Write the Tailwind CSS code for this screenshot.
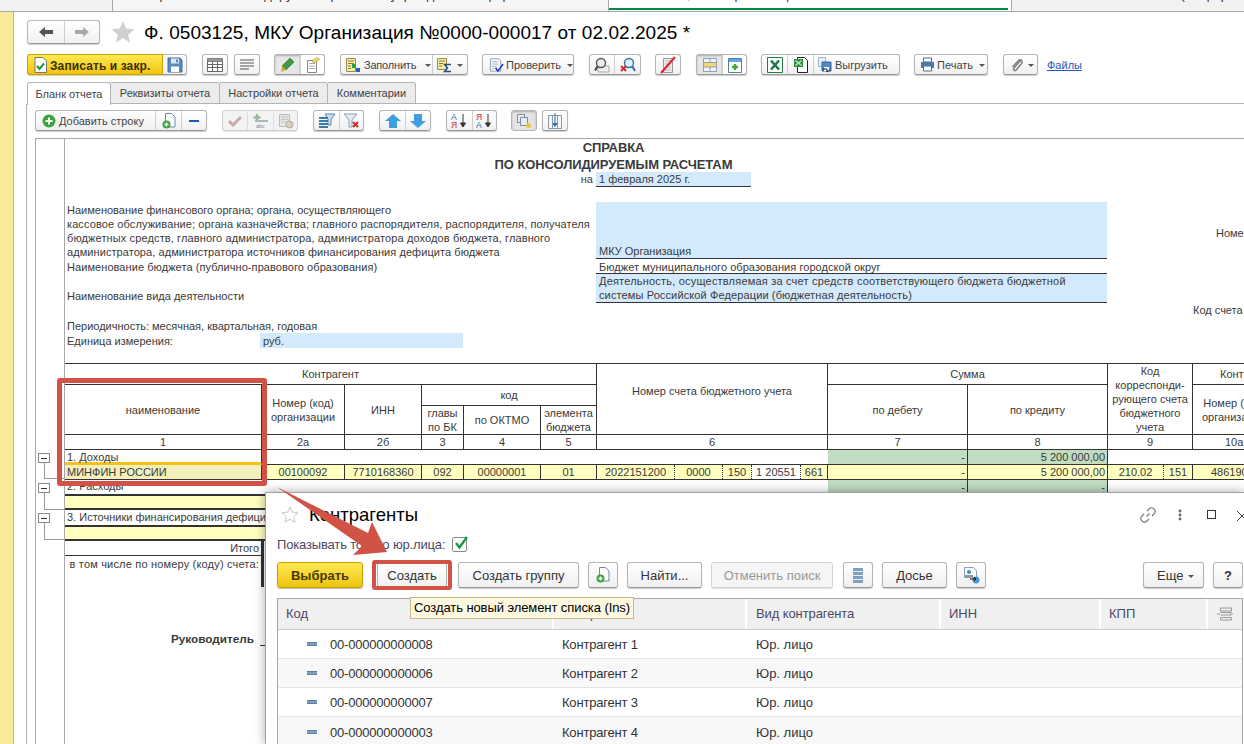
<!DOCTYPE html>
<html lang="ru">
<head>
<meta charset="utf-8">
<title>Ф. 0503125</title>
<script src="https://cdn.jsdelivr.net/npm/@tailwindcss/browser@4"></script>
</head>
<body class="bg-white">
<div class="relative w-[1244px] h-[744px] overflow-hidden bg-white flex flex-col font-['Liberation_Sans',Arial,sans-serif] text-[#333]">

  <!-- top tab strip -->
  <div class="h-[12px] shrink-0 flex border-b border-[#a8a8a8] text-[13px] leading-[16px] whitespace-nowrap overflow-hidden">
    <div class="w-[113px] bg-[#f2f2f2] border-r border-[#a8a8a8]"></div>
    <div class="w-[496px] bg-[#f6f6f6] border-r border-[#a8a8a8] overflow-hidden"><div class="-mt-[13px] pl-[30px]">Справка по консолидируемым расчетам учреждения по форме</div></div>
    <div class="w-[403px] bg-white border-r border-[#a8a8a8] overflow-hidden relative"><div class="-mt-[13px] pl-[10px]">Ф. 0503125, МКУ Организация №0000-000017</div><div class="absolute left-0 right-[3px] bottom-[1px] h-[2px] bg-[#008c45]"></div></div>
    <div class="flex-1 bg-[#f2f2f2] overflow-hidden"><div class="-mt-[13px] pl-[120px]">Отчеты (по форме)</div></div>
  </div>

  <div class="flex-1 flex min-h-0">
    <!-- left yellow strip -->
    <div class="w-[14px] shrink-0 bg-[#fbe99a] border-r border-[#c9bd7c]"></div>

    <div class="flex-1 min-w-0 flex flex-col">
      <!-- title row -->
      <div class="h-[24px] mt-[8px] ml-[13px] flex items-center shrink-0">
        <div class="w-[73px] h-[24px] flex border border-[#b8b8b8] border-b-[#999] rounded-[3px] bg-linear-to-b from-white to-[#f1f1f1] shadow-[0_1px_1px_rgba(0,0,0,0.2)]">
          <div class="w-[37px] flex items-center justify-center border-r border-[#cfcfcf]"><svg width="16" height="12" viewBox="0 0 16 12"><path d="M1 6l6-5v3h8v4H7v3z" fill="#555"/></svg></div>
          <div class="flex-1 flex items-center justify-center"><svg width="16" height="12" viewBox="0 0 16 12"><path d="M15 6L9 1v3H1v4h8v3z" fill="#a9a9a9"/></svg></div>
        </div>
        <svg class="ml-[11px]" width="24" height="24" viewBox="0 0 24 24"><path d="M12 1l3.2 7.6 8.2.7-6.2 5.4 1.900 8L12 18l-7.100 4.700 1.900-8L.6 9.300l8.200-.7z" fill="#cfcfcf"/></svg>
        <div class="ml-[9px] pt-[2px] text-[19px] leading-[24px] tracking-[0.05px] text-black whitespace-nowrap">Ф. 0503125, МКУ Организация №0000-000017 от 02.02.2025 *</div>
      </div>

      <!-- main toolbar -->
      <div class="h-[21px] mt-[10px] ml-[13px] flex shrink-0 text-[11px] text-[#444] whitespace-nowrap">
        <div class="w-[160px] flex border border-[#b4b4b4] border-b-[#999] rounded-[3px] bg-linear-to-b from-white to-[#f0f0f0] shadow-[0_1px_1px_rgba(0,0,0,0.2)]">
          <div class="w-[136px] -m-px flex items-center pl-[6px] gap-[3px] rounded-l-[3px] bg-linear-to-b from-[#ffe94d] to-[#f0c400] border border-[#c9a400] font-bold text-[12px] text-[#3b3000] tracking-[0.1px]">
            <svg width="13" height="16" viewBox="0 0 13 16"><path d="M1 .5h8l3.500 3.500v11.500H1z" fill="#fff" stroke="#777"/><path d="M3 9l2.500 3L10 6.500" fill="none" stroke="#1c9b3a" stroke-width="2"/></svg>
            <span class="pt-[2px]">Записать и закр.</span>
          </div>
          <div class="flex-1 ml-[1px] flex items-center justify-center"><svg width="16" height="16" viewBox="0 0 16 16"><path d="M1 1h12l2 2v12H1z" fill="#5b8cc0" stroke="#3e6b9c"/><path d="M4 1.500h8v5H4z" fill="#dbe8f5"/><path d="M4 9.500h8V15H4z" fill="#fff"/><path d="M9 2.500h2v3H9z" fill="#5b8cc0"/></svg></div>
        </div>
        <div class="w-[26px] ml-[15px] flex items-center justify-center border border-[#b4b4b4] border-b-[#999] rounded-[3px] bg-linear-to-b from-white to-[#f0f0f0] shadow-[0_1px_1px_rgba(0,0,0,0.2)]"><svg width="16" height="14" viewBox="0 0 16 14"><path d="M.5.5h15v13H.5zM.5 3.500h15M.5 6.500h15M.5 9.500h15M5.500.5v13M10.500.5v13" fill="#fff" stroke="#666"/><path d="M.5.500h15v3H.5z" fill="#999"/></svg></div>
        <div class="w-[26px] ml-[6px] flex items-center justify-center border border-[#b4b4b4] border-b-[#999] rounded-[3px] bg-linear-to-b from-white to-[#f0f0f0] shadow-[0_1px_1px_rgba(0,0,0,0.2)]"><svg width="14" height="11" viewBox="0 0 14 11"><path d="M0 1h14M0 4h14M0 7h14M0 10h9" stroke="#555" fill="none"/></svg></div>
        <div class="w-[51px] ml-[14px] flex border border-[#b4b4b4] border-b-[#999] rounded-[3px] bg-white shadow-[0_1px_1px_rgba(0,0,0,0.2)]">
          <div class="w-[26px] bg-[#e6e6e6] shadow-[inset_0_1px_2px_rgba(0,0,0,0.25)] flex items-center justify-center border-r border-[#cfcfcf]"><svg width="15" height="16" viewBox="0 0 15 16"><path d="M10 1l4 4-8 8-4-4z" fill="#3e9a3e" stroke="#2a6f2a" stroke-width=".6"/><path d="M2 9l4 4-5 2z" fill="#e8a33c"/></svg></div>
          <div class="flex-1 flex items-center justify-center"><svg width="14" height="16" viewBox="0 0 14 16"><path d="M1.500 3.500h9v12h-9z" fill="#fff" stroke="#888"/><path d="M3 6.500h6M3 9h6M3 11.500h6" stroke="#aaa"/><path d="M6 4l5-3.500 2.500 2L8 6z" fill="#f5dd60" stroke="#a08a20" stroke-width=".6"/></svg></div>
        </div>
        <div class="w-[128px] ml-[15px] flex border border-[#b4b4b4] border-b-[#999] rounded-[3px] bg-linear-to-b from-white to-[#f0f0f0] shadow-[0_1px_1px_rgba(0,0,0,0.2)]">
          <div class="w-[92px] flex items-center pl-[4px] gap-[3px] border-r border-[#cfcfcf]">
            <svg width="16" height="16" viewBox="0 0 16 16"><path d="M1.500 1.500h9v13h-9z" fill="#f6eda5" stroke="#9a8a45"/><path d="M3 4h6M3 6.500h6M3 9h3M3 11.500h3" stroke="#8b7d40"/><path d="M7 7h4v4H7z" fill="#25a244"/><path d="M11 11h4v4h-4z" fill="#2f5fb3"/></svg>
            <span class="pt-[2px] tracking-[-0.2px]">Заполнить</span><span class="ml-[6px] mt-[1px] w-0 h-0 border-x-[3px] border-x-transparent border-t-[3px] border-t-[#555]"></span>
          </div>
          <div class="flex-1 flex items-center pl-[3px] gap-[5px]">
            <svg width="16" height="16" viewBox="0 0 16 16"><path d="M1.500 1.500h9v11h-9z" fill="#f6eda5" stroke="#9a8a45"/><path d="M3 4h6M3 6.500h4M3 9h3" stroke="#8b7d40"/><path d="M15 7.500H8.500l3 3.500-3 3.500H15" fill="none" stroke="#274c8a" stroke-width="1.400"/></svg>
            <span class="mt-[1px] w-0 h-0 border-x-[3px] border-x-transparent border-t-[3px] border-t-[#555]"></span>
          </div>
        </div>
        <div class="w-[92px] ml-[14px] flex items-center pl-[6px] gap-[2px] border border-[#b4b4b4] border-b-[#999] rounded-[3px] bg-linear-to-b from-white to-[#f0f0f0] shadow-[0_1px_1px_rgba(0,0,0,0.2)]">
          <svg width="16" height="16" viewBox="0 0 16 16"><path d="M1.500 1.500h9l2 2v11h-11z" fill="#fff" stroke="#8a9ab5"/><path d="M3 4.500h7M3 7h7M3 9.500h5M3 12h3" stroke="#a0a8b8"/><path d="M7 11l2.500 3.500L15 7" fill="none" stroke="#1a2fd0" stroke-width="1.600"/></svg>
          <span class="pt-[2px]">Проверить</span><span class="ml-[4px] mt-[1px] w-0 h-0 border-x-[3px] border-x-transparent border-t-[3px] border-t-[#555]"></span>
        </div>
        <div class="w-[52px] ml-[15px] flex border border-[#b4b4b4] border-b-[#999] rounded-[3px] bg-linear-to-b from-white to-[#f0f0f0] shadow-[0_1px_1px_rgba(0,0,0,0.2)]">
          <div class="w-[25px] flex items-center justify-center border-r border-[#cfcfcf]"><svg width="16" height="16" viewBox="0 0 16 16"><path d="M4 9h11v6H4z" fill="#eee" stroke="#aaa"/><circle cx="7" cy="6" r="4.500" fill="#e8eef0" stroke="#555" stroke-width="1.400"/><path d="M3.500 9.500L1 13.500" stroke="#444" stroke-width="2"/></svg></div>
          <div class="flex-1 flex items-center justify-center"><svg width="16" height="16" viewBox="0 0 16 16"><circle cx="9" cy="6" r="4.500" fill="#e4f0fa" stroke="#2f6fa8" stroke-width="1.400"/><path d="M12.500 9.500L15 14" stroke="#2f6fa8" stroke-width="2"/><path d="M1 9l5 5M6 9l-5 5" stroke="#d9262c" stroke-width="2"/></svg></div>
        </div>
        <div class="w-[26px] ml-[14px] flex items-center justify-center border border-[#b4b4b4] border-b-[#999] rounded-[3px] bg-linear-to-b from-white to-[#f0f0f0] shadow-[0_1px_1px_rgba(0,0,0,0.2)]"><svg width="18" height="18" viewBox="0 0 18 18"><path d="M4.500 2.500h9v14h-9z" fill="#eee" stroke="#999"/><path d="M6 5h6M6 8h6M6 11h6M6 14h6" stroke="#bbb"/><path d="M2 17L16 1" stroke="#e2202a" stroke-width="2"/></svg></div>
        <div class="w-[51px] ml-[15px] flex border border-[#b4b4b4] border-b-[#999] rounded-[3px] bg-white shadow-[0_1px_1px_rgba(0,0,0,0.2)]">
          <div class="w-[26px] bg-[#e6e6e6] shadow-[inset_0_1px_2px_rgba(0,0,0,0.25)] flex items-center justify-center border-r border-[#cfcfcf]"><svg width="14" height="14" viewBox="0 0 14 14"><path d="M.5.500h13v13H.5z" fill="#f2f5f8" stroke="#8ea2b5"/><path d="M1 5h12v4H1z" fill="#f5d76a"/><path d="M.5 4.500h13M.5 9h13M7 .5V4M7 9v5" stroke="#8ea2b5"/></svg></div>
          <div class="flex-1 flex items-center justify-center"><svg width="14" height="16" viewBox="0 0 14 16"><path d="M.5 1.500h13v14H.5z" fill="#fff" stroke="#5d7d9c"/><path d="M1 2h12v3H1z" fill="#5aa9e6"/><path d="M7 7v6M4 10h6" stroke="#3eae2f" stroke-width="2.400"/></svg></div>
        </div>
        <div class="w-[139px] ml-[14px] flex border border-[#b4b4b4] border-b-[#999] rounded-[3px] bg-linear-to-b from-white to-[#f0f0f0] shadow-[0_1px_1px_rgba(0,0,0,0.2)]">
          <div class="w-[26px] flex items-center justify-center border-r border-[#cfcfcf]"><svg width="16" height="16" viewBox="0 0 16 16"><path d="M.5.500h15v15H.5z" fill="#fff" stroke="#1f7a45"/><path d="M4 3.500l8 9M12 3.500l-8 9" stroke="#1f7a45" stroke-width="2.600"/></svg></div>
          <div class="w-[26px] flex items-center justify-center border-r border-[#cfcfcf]"><svg width="16" height="18" viewBox="0 0 16 18"><path d="M4.500 1.500h7l3 3v12h-10z" fill="#fff" stroke="#222"/><path d="M1 3h9v8H1z" fill="#2f8f3f"/><path d="M2.500 4.500l6 5M8.500 4.500l-6 5" stroke="#bfe6bf" stroke-width="1.400"/></svg></div>
          <div class="flex-1 flex items-center pl-[3px] gap-[2px]"><svg width="16" height="18" viewBox="0 0 16 18"><path d="M1.500 1.500h7v9h-7z" fill="#e8eef6" stroke="#9fb2c9"/><path d="M5 6h9v9H5z" fill="#4b8cc8" stroke="#2f6595"/><path d="M7 11h5v4H7z" fill="#fff"/><path d="M6 13h4v3l3-2" fill="none" stroke="#111"/></svg><span class="pt-[2px]">Выгрузить</span></div>
        </div>
        <div class="w-[74px] ml-[14px] flex items-center pl-[5px] gap-[2px] border border-[#b4b4b4] border-b-[#999] rounded-[3px] bg-linear-to-b from-white to-[#f0f0f0] shadow-[0_1px_1px_rgba(0,0,0,0.2)]">
          <svg width="15" height="15" viewBox="0 0 15 15"><path d="M3.500 1h8v4h-8z" fill="#fff" stroke="#4a6f95"/><path d="M1 5h13v6H1z" fill="#4a7bab"/><path d="M3.500 9h8v5h-8z" fill="#fff" stroke="#4a6f95"/></svg>
          <span class="pt-[2px]">Печать</span><span class="ml-[4px] mt-[1px] w-0 h-0 border-x-[3px] border-x-transparent border-t-[3px] border-t-[#555]"></span>
        </div>
        <div class="w-[35px] ml-[15px] flex items-center pl-[6px] gap-[5px] border border-[#b4b4b4] border-b-[#999] rounded-[3px] bg-linear-to-b from-white to-[#f0f0f0] shadow-[0_1px_1px_rgba(0,0,0,0.2)]">
          <svg width="13" height="16" viewBox="0 0 13 16"><path d="M11 3L4 11c-1.500 2 .8 3.500 2.200 2l5.300-6.500c2-2.500-1-5-3-3L2.500 10" fill="none" stroke="#777" stroke-width="1.300"/></svg>
          <span class="mt-[1px] w-0 h-0 border-x-[3px] border-x-transparent border-t-[3px] border-t-[#555]"></span>
        </div>
        <a class="ml-[9px] leading-[23px] text-[#1f55c0] underline">Файлы</a>
      </div>

      <!-- tabs -->
      <div class="h-[22px] mt-[7px] ml-[13px] flex shrink-0 text-[11px] text-[#444] whitespace-nowrap">
        <div class="w-[84px] -mb-px z-10 flex items-center justify-center bg-white border border-b-0 border-[#b4b4b4] rounded-t-[3px]">Бланк отчета</div>
        <div class="w-[109px] flex items-center justify-center bg-[#ececec] border-t border-r border-b border-[#b4b4b4] rounded-tr-[3px]">Реквизиты отчета</div>
        <div class="w-[108px] flex items-center justify-center bg-[#ececec] border-t border-r border-b border-[#b4b4b4] rounded-tr-[3px]">Настройки отчета</div>
        <div class="w-[88px] flex items-center justify-center bg-[#ececec] border-t border-r border-b border-[#b4b4b4] rounded-tr-[3px]">Комментарии</div>
        <div class="flex-1 border-b border-[#b4b4b4]"></div>
      </div>

      <!-- tab panel -->
      <div class="flex-1 min-h-0 ml-[12px] border-l border-[#b4b4b4] flex flex-col">
        <!-- second toolbar -->
        <div class="h-[21px] mt-[6px] ml-[8px] flex shrink-0 text-[11px] text-[#444] whitespace-nowrap">
          <div class="w-[172px] flex border border-[#b4b4b4] border-b-[#999] rounded-[3px] bg-linear-to-b from-white to-[#f0f0f0] shadow-[0_1px_1px_rgba(0,0,0,0.2)]">
            <div class="w-[120px] flex items-center pl-[6px] gap-[3px] border-r border-[#cfcfcf]"><svg width="14" height="14" viewBox="0 0 14 14"><circle cx="7" cy="7" r="6.500" fill="#3aa53a"/><path d="M7 3.500v7M3.500 7h7" stroke="#fff" stroke-width="2"/></svg><span class="pt-[2px]">Добавить строку</span></div>
            <div class="w-[26px] flex items-center justify-center border-r border-[#cfcfcf]"><svg width="14" height="16" viewBox="0 0 14 16"><path d="M3.500 .5h6l3.500 3.500v10h-9.500z" fill="#fff" stroke="#6d8ba8"/><circle cx="4.500" cy="11.500" r="4" fill="#3aa53a"/><path d="M4.500 9.500v4M2.500 11.500h4" stroke="#fff" stroke-width="1.400"/></svg></div>
            <div class="flex-1 flex items-center justify-center"><div class="w-[10px] h-[2px] bg-[#1c5cab]"></div></div>
          </div>
          <div class="w-[76px] ml-[15px] flex border border-[#cfcfcf] rounded-[3px] bg-[#f3f3f3] shadow-[0_1px_1px_rgba(0,0,0,0.12)]">
            <div class="w-[25px] flex items-center justify-center border-r border-[#dedede]"><svg width="14" height="12" viewBox="0 0 14 12"><path d="M1 6l4 4 8-8" fill="none" stroke="#c8a8a8" stroke-width="3"/></svg></div>
            <div class="w-[26px] flex items-center justify-center border-r border-[#dedede]"><svg width="17" height="15" viewBox="0 0 17 15"><path d="M5 1v7M1.500 4.500h7" stroke="#9bb89b" stroke-width="2.400"/><path d="M3 7h13v2H3z" fill="#aab7bd"/><text x="4" y="15" font-size="5.500" font-family="Liberation Sans" fill="#888">abc</text></svg></div>
            <div class="flex-1 flex items-center justify-center"><svg width="16" height="16" viewBox="0 0 16 16"><path d="M1.500 1.500h10v12h-10z" fill="#e6e6e6" stroke="#bbb"/><path d="M3 4h7M3 6.500h7M3 9h5" stroke="#c4c4c4"/><circle cx="11.500" cy="11.500" r="3.500" fill="#d8cfc0" stroke="#b5a995"/></svg></div>
          </div>
          <div class="w-[51px] ml-[15px] flex border border-[#b4b4b4] border-b-[#999] rounded-[3px] bg-linear-to-b from-white to-[#f0f0f0] shadow-[0_1px_1px_rgba(0,0,0,0.2)]">
            <div class="w-[26px] flex items-center justify-center border-r border-[#cfcfcf]"><svg width="18" height="15" viewBox="0 0 18 15"><path d="M7 1h10l-4 5v6H10V6z" fill="#cfe0ec" stroke="#5d87a8"/><path d="M1 5h9M1 8h9M1 11h9M1 14h9" stroke="#3a7cb0" stroke-width="2"/></svg></div>
            <div class="flex-1 flex items-center justify-center"><svg width="17" height="15" viewBox="0 0 17 15"><path d="M1 1h13L9 7v7H6V7z" fill="#e6edf2" stroke="#8aa0b0"/><path d="M10 9l5 5M15 9l-5 5" stroke="#d9262c" stroke-width="2"/></svg></div>
          </div>
          <div class="w-[52px] ml-[15px] flex border border-[#b4b4b4] border-b-[#999] rounded-[3px] bg-linear-to-b from-white to-[#f0f0f0] shadow-[0_1px_1px_rgba(0,0,0,0.2)]">
            <div class="w-[26px] flex items-center justify-center border-r border-[#cfcfcf]"><svg width="16" height="14" viewBox="0 0 16 14"><path d="M8 0l8 7h-4v7H4V7H0z" fill="#3f9fe0"/></svg></div>
            <div class="flex-1 flex items-center justify-center"><svg width="16" height="14" viewBox="0 0 16 14"><path d="M8 14l8-7h-4V0H4v7H0z" fill="#3f9fe0"/></svg></div>
          </div>
          <div class="w-[51px] ml-[15px] flex border border-[#b4b4b4] border-b-[#999] rounded-[3px] bg-linear-to-b from-white to-[#f0f0f0] shadow-[0_1px_1px_rgba(0,0,0,0.2)]">
            <div class="w-[26px] flex items-center justify-center border-r border-[#cfcfcf]"><svg width="17" height="17" viewBox="0 0 17 17"><text x="0" y="7.500" font-size="8.500" font-family="Liberation Sans" fill="#1f6fc0">А</text><text x="0" y="16" font-size="8.500" font-family="Liberation Sans" fill="#c0262c">Я</text><path d="M12 2v12M9.500 11l2.500 4 2.500-4z" fill="#333" stroke="#333"/></svg></div>
            <div class="flex-1 flex items-center justify-center"><svg width="17" height="17" viewBox="0 0 17 17"><text x="0" y="7.500" font-size="8.500" font-family="Liberation Sans" fill="#c0262c">Я</text><text x="0" y="16" font-size="8.500" font-family="Liberation Sans" fill="#1f6fc0">А</text><path d="M12 2v12M9.500 11l2.500 4 2.500-4z" fill="#333" stroke="#333"/></svg></div>
          </div>
          <div class="w-[26px] ml-[14px] flex items-center justify-center border border-[#b4b4b4] rounded-[3px] bg-[#e4e4e4] shadow-[inset_0_1px_2px_rgba(0,0,0,0.25)]"><svg width="16" height="16" viewBox="0 0 16 16"><path d="M1.500 1.500h7v8h-7z" fill="#e6edf2" stroke="#7d8f9e"/><path d="M4.500 4.500h7v8h-7z" fill="#e6edf2" stroke="#7d8f9e"/><circle cx="12.500" cy="12.500" r="2.500" fill="#f0c33c"/></svg></div>
          <div class="w-[26px] ml-[5px] flex items-center justify-center border border-[#b4b4b4] border-b-[#999] rounded-[3px] bg-linear-to-b from-white to-[#f0f0f0] shadow-[0_1px_1px_rgba(0,0,0,0.2)]"><svg width="16" height="17" viewBox="0 0 16 17"><path d="M1.500 3.500h13v13h-13zM5.500 3.500v13M10.500 3.500v13" fill="#f4f6f8" stroke="#8b9aa8"/><path d="M8 1v13M6 11.500l2 3 2-3z" fill="#2f6fb0" stroke="#2f6fb0"/></svg></div>
        </div>

        <!-- spreadsheet -->
        <div class="flex-1 min-h-0 mt-[7px] ml-[8px] border-l border-t border-[#a8a8a8] flex text-[11px] leading-[14px] text-[#3a3a3a] whitespace-nowrap">
          <!-- outline gutter -->
          <div class="relative w-[29px] shrink-0 border-r border-[#a8a8a8]">
            <div class="absolute left-[8px] top-[314px] w-[1px] h-[25px] bg-[#9a9a9a]"></div>
            <div class="absolute left-[8px] top-[339px] w-[20px] h-[1px] bg-[#9a9a9a]"></div>
            <div class="absolute left-[2px] top-[314px] w-[12px] h-[10px] bg-white border border-[#8a8a8a] flex items-center justify-center"><div class="w-[6px] h-[1px] bg-[#333]"></div></div>
            <div class="absolute left-[8px] top-[344px] w-[1px] h-[26px] bg-[#9a9a9a]"></div>
            <div class="absolute left-[8px] top-[370px] w-[20px] h-[1px] bg-[#9a9a9a]"></div>
            <div class="absolute left-[2px] top-[344px] w-[12px] h-[10px] bg-white border border-[#8a8a8a] flex items-center justify-center"><div class="w-[6px] h-[1px] bg-[#333]"></div></div>
            <div class="absolute left-[8px] top-[374px] w-[1px] h-[26px] bg-[#9a9a9a]"></div>
            <div class="absolute left-[8px] top-[400px] w-[20px] h-[1px] bg-[#9a9a9a]"></div>
            <div class="absolute left-[2px] top-[374px] w-[12px] h-[10px] bg-white border border-[#8a8a8a] flex items-center justify-center"><div class="w-[6px] h-[1px] bg-[#333]"></div></div>
          </div>

          <!-- sheet -->
          <div class="flex-1 min-w-0 overflow-hidden">
            <!-- heading -->
            <div class="w-[1097px] h-[33px] text-center font-bold text-[13px] leading-[17px] tracking-[-0.1px]">
              <div>СПРАВКА</div>
              <div>ПО КОНСОЛИДИРУЕМЫМ РАСЧЕТАМ</div>
            </div>
            <div class="flex h-[15px]">
              <div class="w-[531px] pr-[3px] text-right leading-[15px]">на</div>
              <div class="w-[155px] bg-[#d3eafd] border-b border-[#333] pl-[3px] leading-[15px]">1 февраля 2025 г.</div>
            </div>

            <!-- requisites -->
            <div class="mt-[15px] grid grid-cols-[531px_511px_1fr] grid-rows-[57px_15px_29px_16px]">
              <div class="pl-[2px] self-end leading-[14px]">
                <div>Наименование финансового органа; органа, осуществляющего</div>
                <div class="tracking-[0.1px]">кассовое обслуживание; органа казначейства; главного распорядителя, распорядителя, получателя</div>
                <div class="tracking-[0.12px]">бюджетных средств, главного администратора, администратора доходов бюджета, главного</div>
                <div class="tracking-[0.07px]">администратора, администратора источников финансирования дефицита бюджета</div>
              </div>
              <div class="bg-[#d3eafd] border-b border-[#333] pl-[3px] flex items-end">МКУ Организация</div>
              <div class="pl-[109px] pt-[24px] overflow-hidden">Номер (код) организации</div>
              <div class="pl-[2px] pt-[1px] tracking-[0.07px]">Наименование бюджета (публично-правового образования)</div>
              <div class="border-b border-[#333] pl-[3px] pt-[1px] tracking-[0.05px]">Бюджет муниципального образования городской округ</div>
              <div></div>
              <div class="pl-[2px] self-end">Наименование вида деятельности</div>
              <div class="bg-[#d3eafd] border-b border-[#333] pl-[3px]">
                <div class="tracking-[0.2px]">Деятельность, осуществляемая за счет средств соответствующего бюджета бюджетной</div>
                <div class="tracking-[0.12px]">системы Российской Федерации (бюджетная деятельность)</div>
              </div>
              <div></div>
              <div></div><div></div>
              <div class="pl-[86px] overflow-hidden">Код счета бюджетного учета</div>
            </div>
            <div class="pl-[2px] h-[14px]">Периодичность: месячная, квартальная, годовая</div>
            <div class="flex h-[15px] pl-[2px]">
              <div class="w-[193px] leading-[17px]">Единица измерения:</div>
              <div class="w-[203px] bg-[#d3eafd] pl-[3px] leading-[17px]">руб.</div>
            </div>

            <!-- table -->
            <div class="mt-[15px] grid grid-cols-[197px_83px_77px_42px_77px_56px_231px_140px_140px_85px_100px] grid-rows-[21px_21px_29px_15px_15px_15px_14px_16px_15px_16px] border-t border-[#333] w-[1300px] text-center leading-[14px]">
              <div class="col-start-1 col-span-6 row-start-1 border-r border-b border-[#333] flex items-center justify-center">Контрагент</div>
              <div class="col-start-7 row-start-1 row-span-3 border-r border-b border-[#333] flex items-center justify-center pb-[16px]">Номер счета бюджетного учета</div>
              <div class="col-start-8 col-span-2 row-start-1 border-r border-b border-[#333] flex items-center justify-center">Сумма</div>
              <div class="col-start-10 row-start-1 row-span-3 border-r border-b border-[#333] flex items-center justify-center whitespace-normal">Код корреспонди-рующего счета бюджетного учета</div>
              <div class="col-start-11 row-start-1 border-b border-[#333] flex items-center justify-start pl-[27px]">Контрагент</div>

              <div class="col-start-1 row-start-2 row-span-2 border-r border-b border-[#333] flex items-center justify-center">наименование</div>
              <div class="col-start-2 row-start-2 row-span-2 border-r border-b border-[#333] flex items-center justify-center whitespace-normal">Номер (код) организации</div>
              <div class="col-start-3 row-start-2 row-span-2 border-r border-b border-[#333] flex items-center justify-center">ИНН</div>
              <div class="col-start-4 col-span-3 row-start-2 border-r border-b border-[#333] flex items-center justify-center">код</div>
              <div class="col-start-4 row-start-3 border-r border-b border-[#333] flex items-center justify-center whitespace-normal">главы по БК</div>
              <div class="col-start-5 row-start-3 border-r border-b border-[#333] flex items-center justify-center">по ОКТМО</div>
              <div class="col-start-6 row-start-3 border-r border-b border-[#333] flex items-center justify-center whitespace-normal">элемента бюджета</div>
              <div class="col-start-8 row-start-2 row-span-2 border-r border-b border-[#333] flex items-center justify-center">по дебету</div>
              <div class="col-start-9 row-start-2 row-span-2 border-r border-b border-[#333] flex items-center justify-center">по кредиту</div>
              <div class="col-start-11 row-start-2 row-span-2 border-b border-[#333] flex items-center justify-start pl-[9px]">Номер (код)<br>организации</div>

              <div class="row-start-4 border-r border-b border-[#333]">1</div>
              <div class="row-start-4 border-r border-b border-[#333]">2а</div>
              <div class="row-start-4 border-r border-b border-[#333]">2б</div>
              <div class="row-start-4 border-r border-b border-[#333]">3</div>
              <div class="row-start-4 border-r border-b border-[#333]">4</div>
              <div class="row-start-4 border-r border-b border-[#333]">5</div>
              <div class="row-start-4 border-r border-b border-[#333]">6</div>
              <div class="row-start-4 border-r border-b border-[#333]">7</div>
              <div class="row-start-4 border-r border-b border-[#333]">8</div>
              <div class="row-start-4 border-r border-b border-[#333]">9</div>
              <div class="row-start-4 border-b border-[#333] text-left pl-[32px]">10а</div>

              <!-- Доходы -->
              <div class="row-start-5 col-start-1 border-r border-b-[3px] border-b-[#f5c21b] border-r-[#333] text-left pl-[2px] leading-[15px]">1. Доходы</div>
              <div class="row-start-5 col-start-2 col-span-6 border-b border-[#333]"></div>
              <div class="row-start-5 col-start-8 bg-[#c1dcc0] border-r border-b border-[#333] text-right pr-[2px]">-</div>
              <div class="row-start-5 col-start-9 bg-[#c1dcc0] border-r border-b border-[#333] text-right pr-[2px]">5 200 000,00</div>
              <div class="row-start-5 col-start-10 col-span-2 border-b border-[#333]"></div>

              <!-- МИНФИН -->
              <div class="row-start-6 col-start-1 bg-[#f3f0bd] border-r border-b border-[#333] text-left pl-[2px]">МИНФИН РОССИИ</div>
              <div class="row-start-6 col-start-2 bg-[#ffffc0] border-r border-b border-[#333]">00100092</div>
              <div class="row-start-6 col-start-3 bg-[#ffffc0] border-r border-b border-[#333]">7710168360</div>
              <div class="row-start-6 col-start-4 bg-[#ffffc0] border-r border-b border-[#333]">092</div>
              <div class="row-start-6 col-start-5 bg-[#ffffc0] border-r border-b border-[#333]">00000001</div>
              <div class="row-start-6 col-start-6 bg-[#ffffc0] border-r border-b border-[#333]">01</div>
              <div class="row-start-6 col-start-7 bg-[#ffffc0] border-r border-b border-[#333] flex">
                <div class="w-[78px] border-r border-dotted border-[#333]">2022151200</div>
                <div class="w-[48px] border-r border-dotted border-[#333]">0000</div>
                <div class="w-[29px] border-r border-dotted border-[#333]">150</div>
                <div class="w-[49px] bg-white border-r border-dotted border-[#333]">1 20551</div>
                <div class="flex-1">661</div>
              </div>
              <div class="row-start-6 col-start-8 bg-[#ffffc0] border-r border-b border-[#333] text-right pr-[2px]">-</div>
              <div class="row-start-6 col-start-9 bg-[#ffffc0] border-r border-b border-[#333] text-right pr-[2px]">5 200 000,00</div>
              <div class="row-start-6 col-start-10 bg-[#ffffc0] border-r border-b border-[#333] flex">
                <div class="w-[56px] border-r border-dotted border-[#333]">210.02</div>
                <div class="flex-1">151</div>
              </div>
              <div class="row-start-6 col-start-11 bg-[#ffffc0] border-b border-[#333] text-left pl-[18px]">486190</div>

              <!-- Расходы -->
              <div class="row-start-7 col-start-1 col-span-7 text-left pl-[2px] leading-[13px]">2. Расходы</div>
              <div class="row-start-7 col-start-8 bg-[#c1dcc0] border-r border-[#333] text-right pr-[2px]">-</div>
              <div class="row-start-7 col-start-9 bg-[#c1dcc0] border-r border-[#333] text-right pr-[2px]">-</div>
              <div class="row-start-8 col-start-1 col-span-11 bg-[#ffffc0] border-y-2 border-[#333]"></div>

              <!-- Источники -->
              <div class="row-start-9 col-start-1 col-span-11 text-left pl-[2px] leading-[15px]">3. Источники финансирования дефицита бюджета</div>
              <div class="row-start-10 col-start-1 col-span-11 bg-[#ffffc0] border-y-2 border-[#333]"></div>
            </div>

            <!-- bottom of the sheet -->
            <div class="flex">
              <div class="w-[196px]">
                <div class="h-[15px] border-b border-[#333] text-right pr-[2px]">Итого</div>
                <div class="h-[31px] pt-[1px] text-right pr-[2px] tracking-[0.18px]">в том числе по номеру (коду) счета:</div>
              </div>
              <div class="w-[3px] h-[46px] bg-[#333]"></div>
            </div>
            <div class="flex mt-[45px] w-[203px]">
              <div class="w-[189px] text-right font-bold text-[11.75px]">Руководитель</div>
              <div class="ml-[6px] mt-[13px] w-[6px] h-[1px] bg-[#333]"></div>
            </div>
          </div>
        </div>
      </div>
    </div>
  </div>

  <!-- red frame around "наименование" -->
  <div class="absolute left-[57px] top-[378px] w-[210px] h-[108px] border-[5px] border-[#d05346] rounded-[3px] pointer-events-none"></div>

  <!-- dialog -->
  <div class="absolute left-[265px] top-[492px] right-0 bottom-0 bg-white border-t border-l border-[#a0a0a0] shadow-[0_0_10px_rgba(0,0,0,0.35)] flex flex-col pl-[11px] text-[13px] leading-[16px] text-[#333] whitespace-nowrap">
    <div class="h-[43px] shrink-0 flex items-center">
      <svg class="ml-[4px] -mt-[1px]" width="18" height="17" viewBox="0 0 18 17"><path d="M9 1l2.300 5.200 5.700.6-4.300 3.800 1.300 5.600L9 13.300 4 16.200l1.300-5.600L1 6.800l5.700-.6z" fill="#fff" stroke="#c8c8c8"/></svg>
      <div class="ml-[10px] text-[18.5px] leading-[22px] text-black">Контрагенты</div>
      <div class="flex-1"></div>
      <svg class="shrink-0" width="16" height="16" viewBox="0 0 16 16"><path d="M6.500 9.500l3-3M7 4l2-2a3 3 0 0 1 5 5l-2 2M9 12l-2 2a3 3 0 0 1-5-5l2-2" fill="none" stroke="#777" stroke-width="1.100"/></svg>
      <svg class="ml-[22px] shrink-0" width="4" height="12" viewBox="0 0 4 12"><circle cx="2" cy="2" r="1.400" fill="#666"/><circle cx="2" cy="6" r="1.400" fill="#666"/><circle cx="2" cy="10" r="1.400" fill="#666"/></svg>
      <div class="ml-[25px] w-[9px] h-[9px] shrink-0 border border-[#333]"></div>
      <svg class="ml-[18px] -mr-[4px] shrink-0" width="14" height="14" viewBox="0 0 14 14"><path d="M3 3l10 10M13 3L3 13" stroke="#444" fill="none"/></svg>
    </div>
    <div class="h-[17px] shrink-0 flex items-center text-[#4c4866]">
      <span class="tracking-[-0.16px]">Показывать только юр.лица:</span>
      <div class="relative ml-[7px] w-[15px] h-[15px] border border-[#888] rounded-[2px] bg-white"><svg class="absolute -top-[3px] left-0" width="16" height="16" viewBox="0 0 16 16"><path d="M3 8l3.500 4.500L14 2" fill="none" stroke="#169c45" stroke-width="2.400"/></svg></div>
    </div>
    <div class="h-[26px] mt-[9px] shrink-0 flex items-stretch">
      <div class="w-[86px] pt-[2px] flex items-center justify-center font-bold text-[#4a3c00] border border-[#c29f0a] rounded-[3px] bg-linear-to-b from-[#ffe94d] to-[#f0c400] shadow-[0_1px_1px_rgba(0,0,0,0.25)]">Выбрать</div>
      <div class="w-[70px] ml-[14px] pt-[2px] flex items-center justify-center border border-[#b4b4b4] border-b-[#999] rounded-[3px] bg-linear-to-b from-white to-[#f0f0f0]">Создать</div>
      <div class="w-[121px] ml-[11px] pt-[2px] flex items-center justify-center border border-[#b4b4b4] border-b-[#999] rounded-[3px] bg-linear-to-b from-white to-[#f0f0f0] shadow-[0_1px_1px_rgba(0,0,0,0.2)]">Создать группу</div>
      <div class="w-[30px] ml-[9px] flex items-center justify-center border border-[#b4b4b4] border-b-[#999] rounded-[3px] bg-linear-to-b from-white to-[#f0f0f0] shadow-[0_1px_1px_rgba(0,0,0,0.2)]"><svg width="14" height="16" viewBox="0 0 14 16"><path d="M3.500 .5h6l3.500 3.500v10h-9.500z" fill="#fff" stroke="#6d8ba8"/><circle cx="4.500" cy="11.500" r="4" fill="#3aa53a"/><path d="M4.500 9.500v4M2.500 11.500h4" stroke="#fff" stroke-width="1.400"/></svg></div>
      <div class="w-[75px] ml-[9px] pt-[2px] flex items-center justify-center border border-[#b4b4b4] border-b-[#999] rounded-[3px] bg-linear-to-b from-white to-[#f0f0f0] shadow-[0_1px_1px_rgba(0,0,0,0.2)]">Найти...</div>
      <div class="w-[122px] ml-[9px] pt-[2px] flex items-center justify-center text-[#999] border border-[#d4d4d4] rounded-[3px] bg-[#f5f5f5] shadow-[0_1px_1px_rgba(0,0,0,0.12)]">Отменить поиск</div>
      <div class="w-[30px] ml-[10px] flex items-center justify-center border border-[#b4b4b4] border-b-[#999] rounded-[3px] bg-linear-to-b from-white to-[#f0f0f0] shadow-[0_1px_1px_rgba(0,0,0,0.2)]"><svg width="10" height="15" viewBox="0 0 10 15"><path d="M0 0h10v15H0z" fill="#7f9fbf"/><path d="M0 3.500h10M0 7.500h10M0 11.500h10" stroke="#e6eef5"/></svg></div>
      <div class="w-[65px] ml-[9px] pt-[2px] flex items-center justify-center border border-[#b4b4b4] border-b-[#999] rounded-[3px] bg-linear-to-b from-white to-[#f0f0f0] shadow-[0_1px_1px_rgba(0,0,0,0.2)]">Досье</div>
      <div class="w-[30px] ml-[9px] flex items-center justify-center border border-[#b4b4b4] border-b-[#999] rounded-[3px] bg-linear-to-b from-white to-[#f0f0f0] shadow-[0_1px_1px_rgba(0,0,0,0.2)]"><svg width="17" height="17" viewBox="0 0 17 17"><path d="M1.500 .5h9l3 3v7h-12z" fill="#fff" stroke="#8fa0b0"/><circle cx="6" cy="5" r="2" fill="#3a8fc8"/><path d="M2 9h8" stroke="#222"/><circle cx="13" cy="13" r="3.500" fill="#3f9bd0"/><path d="M7 12h6l-2-2M13 12l-2 2" fill="none" stroke="#111"/></svg></div>
      <div class="flex-1"></div>
      <div class="w-[61px] pt-[2px] flex items-center pl-[13px] gap-[5px] border border-[#b4b4b4] border-b-[#999] rounded-[3px] bg-linear-to-b from-white to-[#f0f0f0] shadow-[0_1px_1px_rgba(0,0,0,0.2)]">Еще<span class="w-0 h-0 border-x-[3px] border-x-transparent border-t-[3px] border-t-[#555]"></span></div>
      <div class="w-[30px] ml-[9px] mr-[1px] pt-[2px] flex items-center justify-center font-bold text-[#333] border border-[#b4b4b4] border-b-[#999] rounded-[3px] bg-linear-to-b from-white to-[#f0f0f0] shadow-[0_1px_1px_rgba(0,0,0,0.2)]">?</div>
    </div>
    <div class="flex-1 mt-[10px] mr-[1px] border-t border-l border-r border-[#a8a8a8] min-h-0">
      <div class="h-[31px] grid grid-cols-[276px_193px_194px_160px_107px_1fr] bg-[#f0f0f0] border-b border-[#c8c8c8] text-[#4c4866]">
        <div class="pl-[8px] flex items-center border-r-2 border-white">Код</div>
        <div class="pl-[8px] flex items-center border-r-2 border-white">Контрагент</div>
        <div class="pl-[9px] flex items-center border-r-2 border-white tracking-[-0.1px]">Вид контрагента</div>
        <div class="pl-[8px] flex items-center border-r-2 border-white">ИНН</div>
        <div class="pl-[8px] flex items-center border-r-2 border-white">КПП</div>
        <div class="flex items-center justify-center"><svg width="16" height="14" viewBox="0 0 16 14"><path d="M3.500 1h11v3h-11zM3.500 5.500h11M3.500 8h11M3.500 10.500h11v2.500h-11z" fill="none" stroke="#999"/><path d="M0 7h3M13 7h3" stroke="#999"/></svg></div>
      </div>
      <div class="h-[29px] grid grid-cols-[276px_193px_1fr] items-center border-b border-[#e4e4e4]">
        <div class="flex items-center pl-[29px]"><div class="w-[10px] h-[4px] bg-[#7f9fbf] border-y border-[#5d7d9c]"></div><span class="ml-[13px] pt-[2px] tracking-[-0.2px]">00-000000000008</span></div>
        <div class="pl-[8px] pt-[2px] tracking-[-0.2px]">Контрагент 1</div>
        <div class="pl-[9px] pt-[2px]">Юр. лицо</div>
      </div>
      <div class="h-[29px] grid grid-cols-[276px_193px_1fr] items-center border-b border-[#e4e4e4] bg-[#f8f8f8]">
        <div class="flex items-center pl-[29px]"><div class="w-[10px] h-[4px] bg-[#7f9fbf] border-y border-[#5d7d9c]"></div><span class="ml-[13px] pt-[2px] tracking-[-0.2px]">00-000000000006</span></div>
        <div class="pl-[8px] pt-[2px] tracking-[-0.2px]">Контрагент 2</div>
        <div class="pl-[9px] pt-[2px]">Юр. лицо</div>
      </div>
      <div class="h-[29px] grid grid-cols-[276px_193px_1fr] items-center border-b border-[#e4e4e4]">
        <div class="flex items-center pl-[29px]"><div class="w-[10px] h-[4px] bg-[#7f9fbf] border-y border-[#5d7d9c]"></div><span class="ml-[13px] pt-[2px] tracking-[-0.2px]">00-000000000007</span></div>
        <div class="pl-[8px] pt-[2px] tracking-[-0.2px]">Контрагент 3</div>
        <div class="pl-[9px] pt-[2px]">Юр. лицо</div>
      </div>
      <div class="h-[29px] grid grid-cols-[276px_193px_1fr] items-center bg-[#f8f8f8]">
        <div class="flex items-center pl-[29px]"><div class="w-[10px] h-[4px] bg-[#7f9fbf] border-y border-[#5d7d9c]"></div><span class="ml-[13px] pt-[2px] tracking-[-0.2px]">00-000000000003</span></div>
        <div class="pl-[8px] pt-[2px] tracking-[-0.2px]">Контрагент 4</div>
        <div class="pl-[9px] pt-[2px]">Юр. лицо</div>
      </div>
    </div>
  </div>

  <!-- annotation over "Создать" -->
  <div class="absolute left-[372px] top-[560px] w-[80px] h-[30px] border-[4px] border-[#d05346] rounded-[3px] pointer-events-none"></div>
  <!-- tooltip -->
  <div class="absolute left-[410px] top-[597px] h-[22px] px-[3px] bg-[#fdf8e0] border border-[#c8b98a] text-[13px] leading-[20px] tracking-[-0.08px] text-black whitespace-nowrap">Создать новый элемент списка (Ins)</div>
  <!-- arrow -->
  <svg class="absolute left-0 top-0 pointer-events-none" width="1244" height="744" viewBox="0 0 1244 744"><path d="M277 487L368 533L372 522L387 552L353 555L362 546Z" fill="#d05346"/></svg>
</div>
</body>
</html>
